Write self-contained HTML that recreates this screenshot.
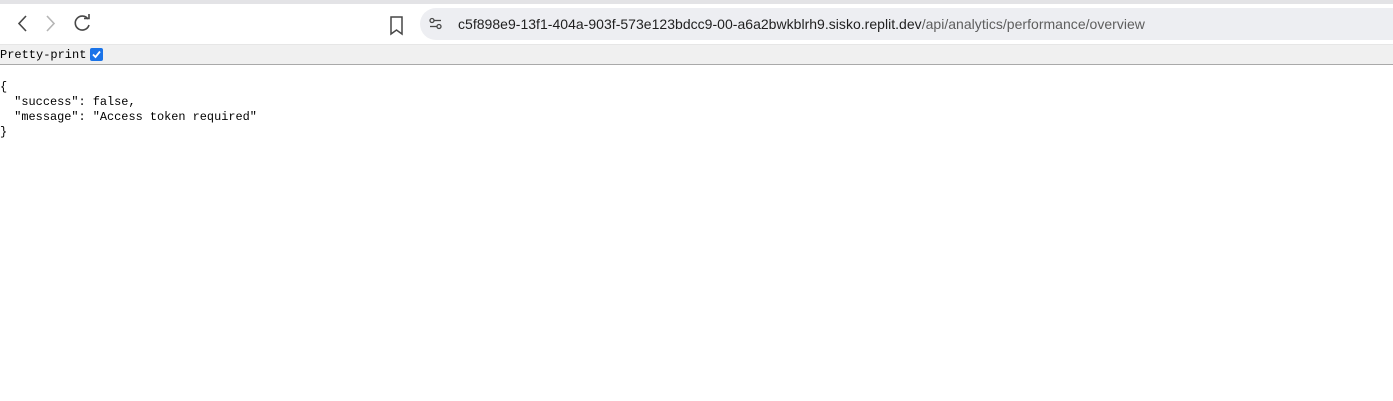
<!DOCTYPE html>
<html><head><style>
body{margin:0;width:1393px;height:401px;background:#fff;overflow:hidden;position:relative;font-family:"Liberation Sans",sans-serif}
.top{position:absolute;left:0;top:0;width:1393px;height:4px;background:#e3e3e6}
.omni{position:absolute;left:420px;top:8px;width:1000px;height:32px;border-radius:16px;background:#edeef2}
.url{position:absolute;left:458px;top:16px;font-size:14px;color:#1f1f1f;white-space:nowrap;letter-spacing:0.02px}
.url span{color:#5e5e5e}
.bar{position:absolute;left:0;top:44px;width:1393px;background:#f0f0f0;border-top:1px solid #e6e6e6;border-bottom:1px solid #a9a9a9;box-sizing:border-box;height:21px}
.pp{position:absolute;left:0;top:48px;font:12px "Liberation Mono",monospace;color:#000}
.cb{position:absolute;left:90px;top:48px;width:13px;height:13px;background:#1a73e8;border-radius:2px}
pre{position:absolute;left:0;top:80px;margin:0;font:11.9px/15px "Liberation Mono",monospace;color:#000}
</style></head><body>
<div class="top"></div>
<svg style="position:absolute;left:0;top:4px" width="420" height="40">
<path d="M26 12 L19 19.5 L26 27" fill="none" stroke="#474747" stroke-width="1.6"/>
<path d="M47 12 L54 19.5 L47 27" fill="none" stroke="#b5b5b5" stroke-width="1.6"/>
<path d="M88 15 A7 7 0 1 0 89 21" fill="none" stroke="#474747" stroke-width="1.6"/>
<path d="M84 14.5 L89 14.5 L89 10" fill="none" stroke="#474747" stroke-width="1.6"/>
<path d="M391 13 h11 v17 l-5.5 -4 l-5.5 4 z" fill="none" stroke="#474747" stroke-width="1.5"/>
</svg>
<div class="omni"></div>
<svg style="position:absolute;left:428px;top:16px" width="16" height="16">
<circle cx="4" cy="4.5" r="2" fill="none" stroke="#474747" stroke-width="1.3"/>
<line x1="6" y1="4.5" x2="13" y2="4.5" stroke="#474747" stroke-width="1.3"/>
<circle cx="11" cy="10.5" r="2" fill="none" stroke="#474747" stroke-width="1.3"/>
<line x1="2" y1="10.5" x2="9" y2="10.5" stroke="#474747" stroke-width="1.3"/>
</svg>
<div class="url">c5f898e9-13f1-404a-903f-573e123bdcc9-00-a6a2bwkblrh9.sisko.replit.dev<span>/api/analytics/performance/overview</span></div>
<div class="bar"></div>
<div class="pp">Pretty-print</div>
<div class="cb"><svg width="13" height="13"><path d="M3 6.5 L5.5 9 L10 3.5" fill="none" stroke="#fff" stroke-width="1.8"/></svg></div>
<pre>{
  "success": false,
  "message": "Access token required"
}</pre>
</body></html>
